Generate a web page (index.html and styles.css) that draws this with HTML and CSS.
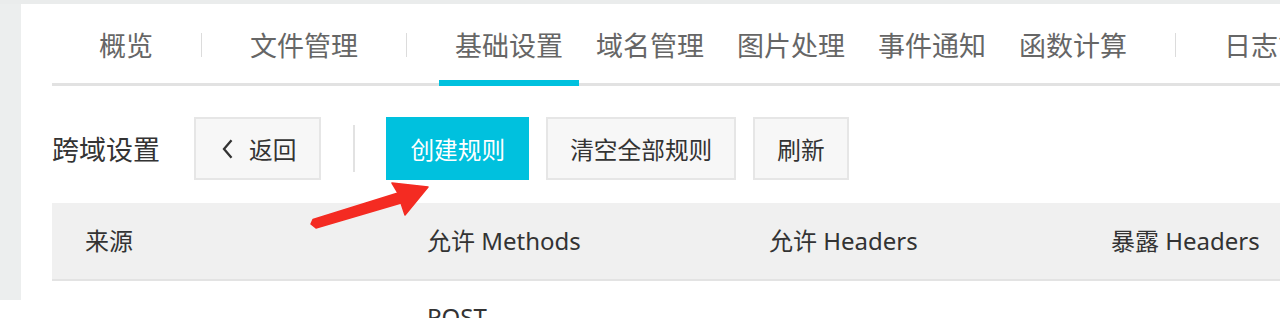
FILE: index.html
```html
<!DOCTYPE html>
<html lang="zh-CN">
<head>
    <meta charset="UTF-8">
    <title>跨域设置</title>
    <link rel="stylesheet" href="styles.css">
</head>
<body>
    <div class="topbar"></div>
    <div class="page">
        <div class="sidebar"></div>
        <div class="main">
            <div class="tabs">
                <div class="tab">概览</div>
                <div class="tab_sep"></div>
                <div class="tab">文件管理</div>
                <div class="tab_sep"></div>
                <div class="tab active">基础设置</div>
                <div class="tab">域名管理</div>
                <div class="tab">图片处理</div>
                <div class="tab">事件通知</div>
                <div class="tab">函数计算</div>
                <div class="tab_sep"></div>
                <div class="tab">日志管理</div>
            </div>

            <div class="toolbar">
                <div class="title">跨域设置</div>
                <div class="btn btn_back">
                    <svg class="chevron" width="11" height="20" viewBox="0 0 11 20"><path d="M9.5 1.2 L2 10 L9.5 18.8" fill="none" stroke="#333" stroke-width="2.3"/></svg>
                    <span>返回</span>
                </div>
                <div class="bar_sep"></div>
                <div class="btn btn_primary">创建规则</div>
                <div class="btn">清空全部规则</div>
                <div class="btn">刷新</div>
            </div>

            <div class="table">
                <div class="thead">
                    <div class="cell">来源</div>
                    <div class="cell">允许 Methods</div>
                    <div class="cell">允许 Headers</div>
                    <div class="cell">暴露 Headers</div>
                </div>
                <div class="trow">
                    <div class="cell"></div>
                    <div class="cell">POST</div>
                    <div class="cell"></div>
                    <div class="cell"></div>
                </div>
            </div>
        </div>
    </div>

    <!-- annotation arrow drawn over the screenshot -->
    <svg class="arrow" width="1280" height="318" viewBox="0 0 1280 318">
        <polygon points="311,224 313,219.5 398,193 392,183 428,187 405,215 401,203 316,228" fill="#f42b22" stroke="#f42b22" stroke-width="1.5" stroke-linejoin="round"/>
    </svg>
</body>
</html>
```

FILE: styles.css
```css
body {
    margin: 0;
    width: 1280px;
    height: 318px;
    overflow: hidden;
    background: #fff;
    position: relative;
    font-family: "Noto Sans", "Noto Sans CJK SC", sans-serif;
    color: #333;
}

.topbar {
    height: 4px;
    background: #eaecec;
}

.page {
    display: flex;
    align-items: flex-start;
}

.sidebar {
    width: 21px;
    height: 296px;
    flex: none;
    background: #eceeee;
}

.main {
    flex: 1;
    margin-left: 31px;
    min-width: 0;
}

/* tabs */
.tabs {
    display: flex;
    align-items: center;
    height: 82px;
    padding-left: 31px;
    box-shadow: inset 0 -3px 0 #e2e2e2;
    white-space: nowrap;
}

.tab {
    flex: none;
    height: 82px;
    line-height: 81px;
    padding: 0 16px;
    margin-right: 1px;
    font-size: 27px;
    color: #666;
    font-family: "Noto Sans CJK SC", sans-serif;
    box-sizing: border-box;
}

.tab.active {
    box-shadow: inset 0 -6px 0 #00c1de;
}

.tab_sep {
    flex: none;
    width: 1px;
    height: 24px;
    margin: 0 32px 0 31px;
    background: #dcdcdc;
}

/* toolbar */
.toolbar {
    display: flex;
    align-items: center;
    padding-top: 31px;
    height: 63px;
}

.title {
    font-size: 27px;
    font-family: "Noto Sans CJK SC", sans-serif;
    color: #333;
    margin-right: 34px;
}

.btn {
    display: flex;
    align-items: center;
    height: 63px;
    box-sizing: border-box;
    padding: 0 22px;
    margin-right: 17px;
    border: 2px solid #e6e6e6;
    background: #f7f7f7;
    font-size: 23.7px;
    font-family: "Noto Sans CJK SC", sans-serif;
    color: #333;
}

.btn_back {
    padding: 0 23px 0 26px;
    margin-right: 0;
}

.chevron {
    margin-right: 16px;
}

.btn_primary {
    background: #00c1de;
    border-color: #00c1de;
    color: #fff;
}

.bar_sep {
    width: 2px;
    height: 47px;
    margin: 0 31px 0 32px;
    background: #e2e2e2;
}

/* table */
.table {
    margin-top: 23px;
}

.thead,
.trow {
    display: grid;
    grid-template-columns: repeat(4, 342px);
}

.thead {
    height: 76px;
    align-items: center;
    background: #f0f0f0;
    border-bottom: 2px solid #e3e3e3;
}

.cell {
    padding-left: 33px;
    font-size: 24px;
    line-height: 32px;
    color: #333;
}

.trow {
    padding-top: 20px;
}

.arrow {
    position: absolute;
    left: 0;
    top: 0;
    pointer-events: none;
}
```
